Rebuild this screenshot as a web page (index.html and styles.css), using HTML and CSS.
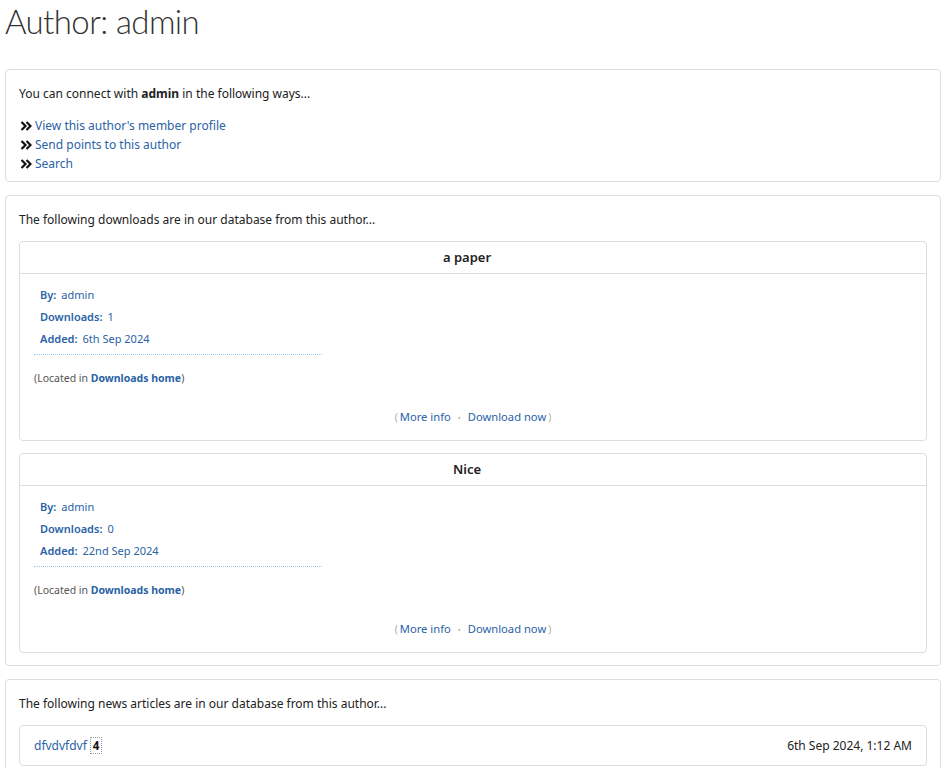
FILE: index.html
```html
<!DOCTYPE html>
<html>
<head>
<meta charset="utf-8">
<title>Author: admin</title>
<link rel="stylesheet" href="styles.css">
</head>
<body>
<div class="page">
  <h1 class="title">Author: admin</h1>

  <section class="box box-connect">
    <p class="intro">You can connect with <strong>admin</strong> in the following ways...</p>
    <ul class="actions">
      <li><svg class="chev" viewBox="0 0 12 10" width="12" height="10"><path d="M1.5 1 L5.5 5 L1.5 9 M6.5 1 L10.5 5 L6.5 9" fill="none" stroke="#111" stroke-width="2.2"/></svg><a href="#">View this author's member profile</a></li>
      <li><svg class="chev" viewBox="0 0 12 10" width="12" height="10"><path d="M1.5 1 L5.5 5 L1.5 9 M6.5 1 L10.5 5 L6.5 9" fill="none" stroke="#111" stroke-width="2.2"/></svg><a href="#">Send points to this author</a></li>
      <li><svg class="chev" viewBox="0 0 12 10" width="12" height="10"><path d="M1.5 1 L5.5 5 L1.5 9 M6.5 1 L10.5 5 L6.5 9" fill="none" stroke="#111" stroke-width="2.2"/></svg><a href="#">Search</a></li>
    </ul>
  </section>

  <section class="box">
    <p class="intro intro-list">The following downloads are in our database from this author...</p>
    <div class="dl-list">
      <div class="dl">
        <div class="dl-head">a paper</div>
        <div class="dl-body">
          <dl class="meta">
            <div class="row"><dt>By:</dt><dd><a href="#">admin</a></dd></div>
            <div class="row"><dt>Downloads:</dt><dd>1</dd></div>
            <div class="row"><dt>Added:</dt><dd>6th Sep 2024</dd></div>
          </dl>
          <p class="located">(Located in <a href="#">Downloads home</a>)</p>
          <p class="dl-links"><span class="paren">(</span><a href="#">More info</a><span class="dot">&bull;</span><a href="#">Download now</a><span class="paren">)</span></p>
        </div>
      </div>
      <div class="dl">
        <div class="dl-head">Nice</div>
        <div class="dl-body">
          <dl class="meta">
            <div class="row"><dt>By:</dt><dd><a href="#">admin</a></dd></div>
            <div class="row"><dt>Downloads:</dt><dd>0</dd></div>
            <div class="row"><dt>Added:</dt><dd>22nd Sep 2024</dd></div>
          </dl>
          <p class="located">(Located in <a href="#">Downloads home</a>)</p>
          <p class="dl-links"><span class="paren">(</span><a href="#">More info</a><span class="dot">&bull;</span><a href="#">Download now</a><span class="paren">)</span></p>
        </div>
      </div>
    </div>
  </section>

  <section class="box">
    <p class="intro intro-list">The following news articles are in our database from this author...</p>
    <div class="news">
      <div class="news-left"><a href="#">dfvdvfdvf</a><span class="count">4</span></div>
      <div class="news-date">6th Sep 2024, 1:12 AM</div>
    </div>
  </section>
</div>
</body>
</html>
```

FILE: styles.css
```css
* { box-sizing: border-box; }

body {
  margin: 0;
  font-family: "Noto Sans", "Open Sans", "DejaVu Sans", sans-serif;
  font-size: 12px;
  line-height: 19px;
  color: #222;
  background: #fff;
}

a { color: #2a62a6; text-decoration: none; }

.page {
  padding: 0 7px 0 5px;
}

.title {
  margin: 0 0 26px;
  font-family: "Lato", "Noto Sans", sans-serif;
  font-size: 33px;
  line-height: 43px;
  font-weight: 300;
  letter-spacing: -0.6px;
  color: #333;
}

.box {
  border: 1px solid #ddd;
  border-radius: 4px;
  padding: 14px 13px 7px;
  margin-bottom: 13px;
}

.box-connect { padding-bottom: 8px; }

.intro {
  margin: 0 0 13px;
}

.intro-list { margin-bottom: 12px; }

.actions {
  list-style: none;
  margin: 0;
  padding: 0;
}

.actions li {
  display: flex;
  align-items: center;
}

.chev {
  flex: none;
  margin: 0 3px 0 1px;
}

.dl-list {
  display: flex;
  flex-direction: column;
  gap: 12px;
  padding-bottom: 5px;
}

.dl {
  border: 1px solid #ddd;
  border-radius: 4px;
}

.dl-head {
  text-align: center;
  font-weight: 600;
  font-size: 13px;
  padding: 6px 12px 6px 0;
  border-bottom: 1px solid #ddd;
}

.dl-body {
  padding: 10px 14px 13px;
}

.meta {
  margin: 0;
  width: 288px;
  padding: 0 6px 4px;
  border-bottom: 1px dotted #9cc8f0;
  font-size: 11px;
  color: #2a62a6;
}

.row {
  display: flex;
  gap: 5px;
  line-height: 22px;
}

.meta dt { font-weight: 600; }
.meta dd { margin: 0; }

.located {
  margin: 14px 0 0;
  font-size: 10.5px;
  color: #555;
}

.located a { font-weight: 700; }

.dl-links {
  margin: 19px 0 0;
  text-align: center;
  font-size: 11.2px;
}

.paren { color: #aaa; font-size: 10px; margin: 0 2px; }
.dot { color: #bbb; font-size: 8px; margin: 0 7px; }

.news {
  border: 1px solid #ddd;
  border-radius: 4px;
  padding: 10px 14px;
  display: flex;
  justify-content: space-between;
  align-items: center;
}

.news-left { display: flex; align-items: center; gap: 3px; }

.count {
  border: 1px dotted #999;
  font-weight: 700;
  color: #111;
  font-size: 11.5px;
  line-height: 15px;
  padding: 0 2px;
}
```
